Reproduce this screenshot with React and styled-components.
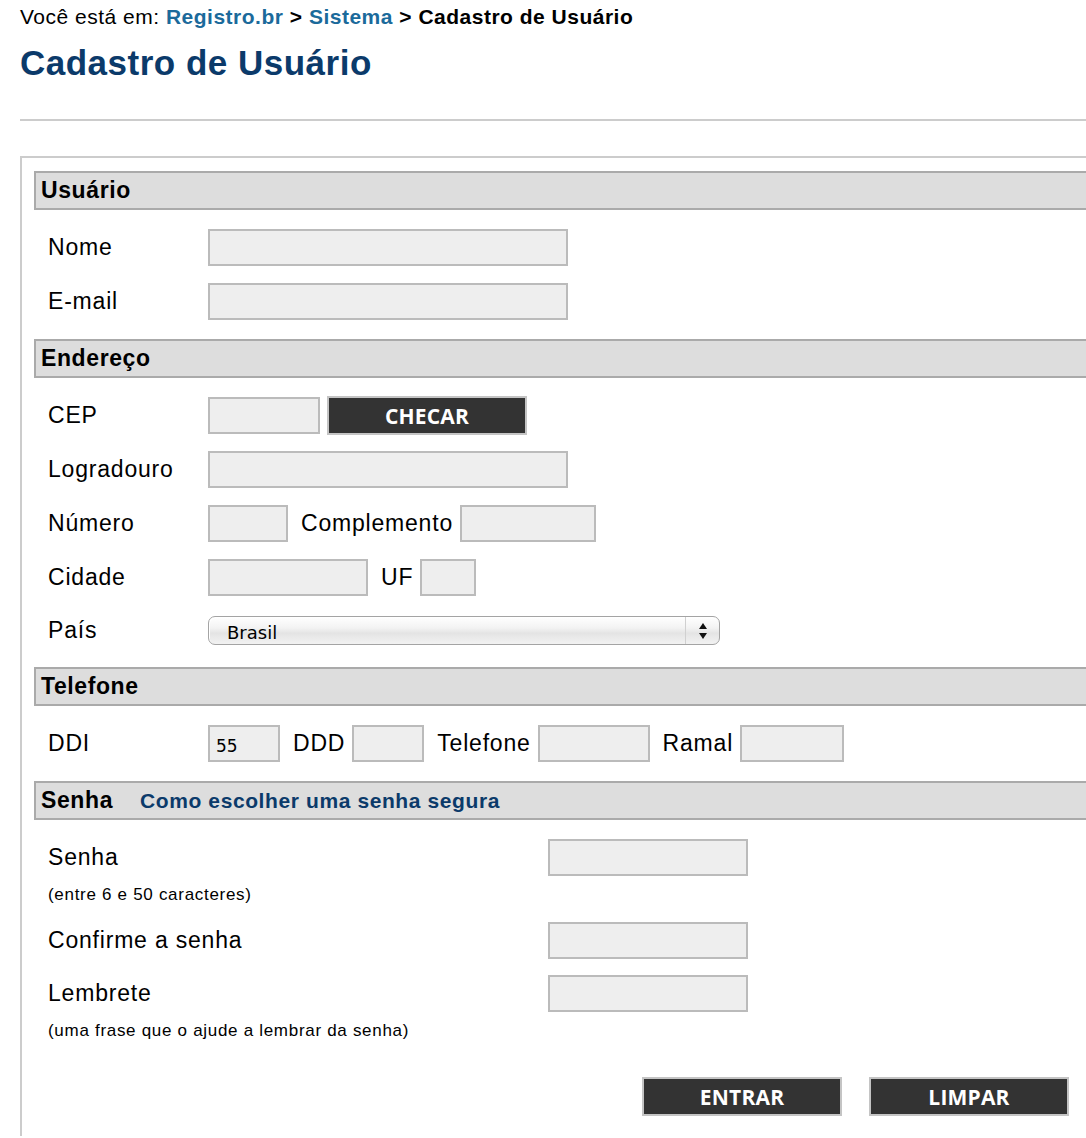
import styled, { createGlobalStyle } from 'styled-components';

const GlobalStyle = createGlobalStyle`
  * { box-sizing: border-box; }
  html, body {
    margin: 0;
    padding: 0;
    background: #fff;
    overflow: hidden;
  }
  body {
    font-family: "Liberation Sans", Arial, Helvetica, sans-serif;
    color: #000;
  }
`;

const Page = styled.div`
  padding-left: 20px;
  width: 1120px;
`;

const Breadcrumb = styled.div`
  font-size: 21px;
  line-height: 34px;
  letter-spacing: 0.5px;

  a {
    color: #1b6a9b;
    font-weight: bold;
    text-decoration: none;
  }
  b { font-weight: bold; }
`;

const Title = styled.h1`
  margin: 7px 0 0;
  font-size: 35px;
  line-height: 44px;
  letter-spacing: 0.5px;
  font-weight: bold;
  color: #0b3a6a;
`;

const Rule = styled.div`
  height: 2px;
  background: #cccccc;
  margin-top: 34px;
`;

const FormBox = styled.div`
  margin-top: 35px;
  border-top: 2px solid #cccccc;
  border-left: 2px solid #cccccc;
  padding: 13px 0 20px 12px;
`;

const SectionHeader = styled.div`
  display: flex;
  align-items: center;
  gap: 27px;
  height: 39px;
  padding-left: 5px;
  background: #dddddd;
  border: 2px solid #aaaaaa;
  border-right: none;
  font-size: 23px;
  font-weight: bold;
  letter-spacing: 0.6px;
`;

const HeaderLink = styled.a`
  font-size: 21px;
  color: #0b3a6a;
  letter-spacing: 0.6px;
  text-decoration: none;
`;

const SectionBody = styled.div`
  display: flex;
  flex-direction: column;
  gap: 17px;
  padding: 19px 0 19px 14px;
`;

const Row = styled.div`
  display: flex;
  align-items: center;
  height: ${({ $h }) => $h || 37}px;
`;

const Label = styled.span`
  width: 160px;
  flex-shrink: 0;
  font-size: 23px;
  letter-spacing: 0.8px;
`;

const InlineLabel = styled.span`
  margin: 0 7px 0 13px;
  font-size: 23px;
  letter-spacing: 0.8px;
`;

const TextInput = styled.input`
  width: ${({ $w }) => $w}px;
  height: 37px;
  margin: 0;
  padding: 4px 6px 0;
  background: #eeeeee;
  border: 2px solid #bbbbbb;
  border-radius: 0;
  font-family: "DejaVu Sans", "Open Sans", sans-serif;
  font-size: 17px;
  color: #000;
  outline: none;
`;

const DarkButton = styled.button`
  width: 200px;
  height: 39px;
  margin: 0 0 0 ${({ $ml }) => $ml || 0}px;
  padding: 0;
  background: #333333;
  border: 2px solid #c4c4c4;
  color: #fff;
  font-family: "Open Sans", "DejaVu Sans", sans-serif;
  font-weight: 700;
  font-size: 21px;
  letter-spacing: 0.2px;
  cursor: pointer;
`;

const SelectBox = styled.div`
  display: flex;
  align-items: center;
  width: 512px;
  height: 29px;
  border: 1px solid #a4a4a4;
  border-radius: 7px;
  background: linear-gradient(#ffffff 0%, #f3f3f3 40%, #e4e4e4 60%, #f2f2f2 100%);
  box-shadow: inset 1px 1px 0 #ffffff;
  font-family: "DejaVu Sans", "Open Sans", sans-serif;
  font-size: 18px;
  padding-left: 18px;
`;

const SelectText = styled.span`
  flex: 1;
  padding-top: 3px;
`;

const SelectArrows = styled.span`
  display: flex;
  align-items: center;
  justify-content: center;
  width: 34px;
  height: 100%;
  border-left: 1px solid #d0d0d0;
`;

const PwdBody = styled.div`
  display: flex;
  flex-direction: column;
  gap: 16px;
  padding: 19px 0 0 14px;
`;

const PwdRow = styled.div`
  display: grid;
  grid-template-columns: 500px 200px;
  align-items: start;
`;

const PwdLabel = styled.div`
  font-size: 23px;
  line-height: 37px;
  letter-spacing: 0.8px;
`;

const Hint = styled.div`
  margin-top: 8px;
  font-size: 17px;
  line-height: 22px;
  letter-spacing: 0.7px;
`;

const Actions = styled.div`
  display: flex;
  gap: 27px;
  margin: 35px 0 0 608px;
`;

function Arrows() {
  return (
    <svg width="10" height="18" viewBox="0 0 10 18">
      <path d="M5 1 L9 7 L1 7 Z" fill="#111" />
      <path d="M1 11 L9 11 L5 17 Z" fill="#111" />
    </svg>
  );
}

export default function App() {
  return (
    <>
      <GlobalStyle />
      <Page>
        <Breadcrumb>
          Você está em: <a href="#">Registro.br</a> <b>&gt;</b> <a href="#">Sistema</a>{' '}
          <b>&gt; Cadastro de Usuário</b>
        </Breadcrumb>
        <Title>Cadastro de Usuário</Title>
        <Rule />

        <FormBox>
          <SectionHeader>Usuário</SectionHeader>
          <SectionBody>
            <Row>
              <Label>Nome</Label>
              <TextInput $w={360} />
            </Row>
            <Row>
              <Label>E-mail</Label>
              <TextInput $w={360} />
            </Row>
          </SectionBody>

          <SectionHeader>Endereço</SectionHeader>
          <SectionBody>
            <Row>
              <Label>CEP</Label>
              <TextInput $w={112} />
              <DarkButton $ml={7}>CHECAR</DarkButton>
            </Row>
            <Row>
              <Label>Logradouro</Label>
              <TextInput $w={360} />
            </Row>
            <Row>
              <Label>Número</Label>
              <TextInput $w={80} />
              <InlineLabel>Complemento</InlineLabel>
              <TextInput $w={136} />
            </Row>
            <Row>
              <Label>Cidade</Label>
              <TextInput $w={160} />
              <InlineLabel>UF</InlineLabel>
              <TextInput $w={56} />
            </Row>
            <Row $h={35}>
              <Label>País</Label>
              <SelectBox>
                <SelectText>Brasil</SelectText>
                <SelectArrows>
                  <Arrows />
                </SelectArrows>
              </SelectBox>
            </Row>
          </SectionBody>

          <SectionHeader>Telefone</SectionHeader>
          <SectionBody>
            <Row>
              <Label>DDI</Label>
              <TextInput $w={72} defaultValue="55" />
              <InlineLabel>DDD</InlineLabel>
              <TextInput $w={72} />
              <InlineLabel>Telefone</InlineLabel>
              <TextInput $w={112} />
              <InlineLabel>Ramal</InlineLabel>
              <TextInput $w={104} />
            </Row>
          </SectionBody>

          <SectionHeader>
            Senha
            <HeaderLink href="#">Como escolher uma senha segura</HeaderLink>
          </SectionHeader>
          <PwdBody>
            <PwdRow>
              <div>
                <PwdLabel>Senha</PwdLabel>
                <Hint>(entre 6 e 50 caracteres)</Hint>
              </div>
              <TextInput $w={200} type="password" />
            </PwdRow>
            <PwdRow>
              <PwdLabel>Confirme a senha</PwdLabel>
              <TextInput $w={200} type="password" />
            </PwdRow>
            <PwdRow>
              <div>
                <PwdLabel>Lembrete</PwdLabel>
                <Hint>(uma frase que o ajude a lembrar da senha)</Hint>
              </div>
              <TextInput $w={200} />
            </PwdRow>
          </PwdBody>

          <Actions>
            <DarkButton>ENTRAR</DarkButton>
            <DarkButton>LIMPAR</DarkButton>
          </Actions>
        </FormBox>
      </Page>
    </>
  );
}
